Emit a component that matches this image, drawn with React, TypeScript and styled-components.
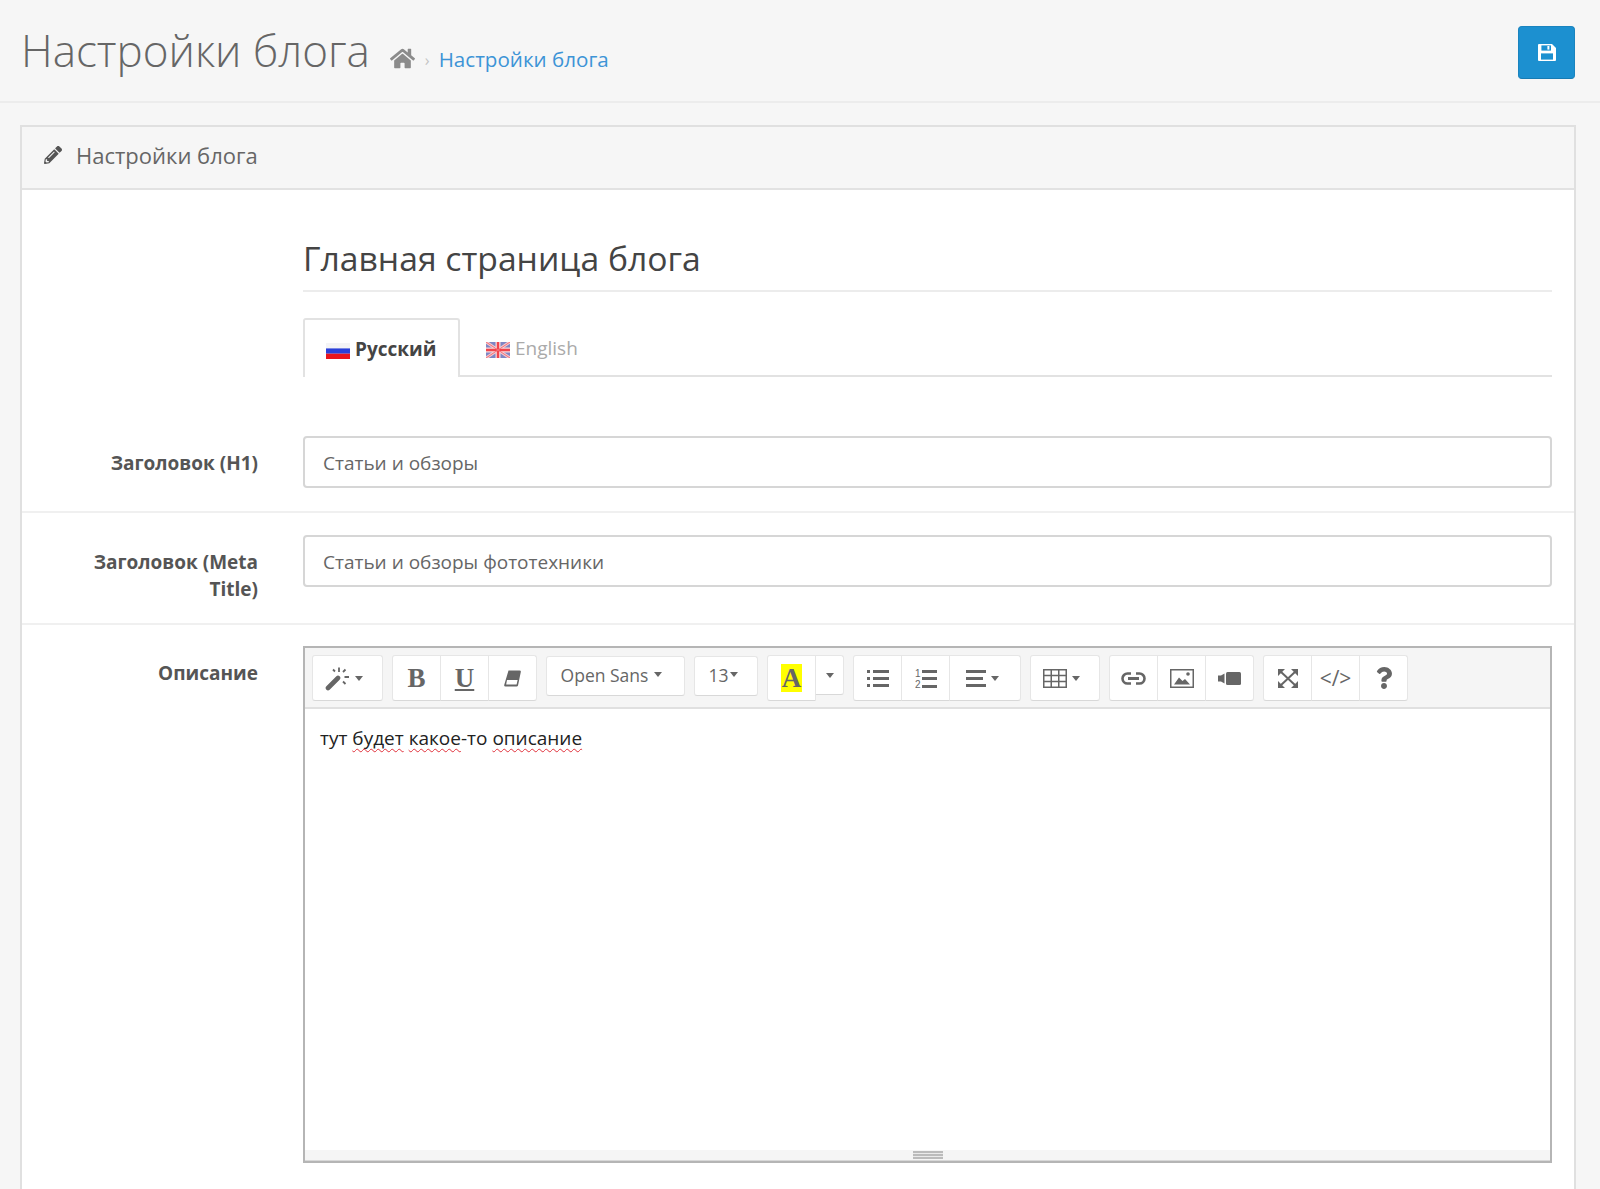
import React from 'react';
import styled, {createGlobalStyle} from 'styled-components';
import {FaHome, FaPencilAlt, FaQuestion} from 'react-icons/fa';

const GlobalStyle = createGlobalStyle`
  html, body {
    margin: 0;
    padding: 0;
    background: #fff;
    font-family: "Open Sans", "Liberation Sans", sans-serif;
    color: #666;
  }
  * { box-sizing: border-box; }
`;

const Page = styled.div`
  height: 100vh;
  overflow: hidden;
  background: #f6f6f6;
`;

const PageHeader = styled.header`
  height: 103px;
  padding: 26px 25px 0 21px;
  display: flex;
  justify-content: space-between;
  border-bottom: 2px solid #ececec;
`;

const TitleLine = styled.div`
  display: flex;
  align-items: center;
  height: 49px;
`;

const PageTitle = styled.h1`
  margin: 0 20px 0 0;
  font-size: 44px;
  font-weight: 300;
  line-height: 49px;
  color: #666;
`;

const Crumbs = styled.nav`
  display: flex;
  align-items: center;
  padding-top: 16px;
  font-size: 20.6px;
  color: #999;
`;

const CrumbSep = styled.span`
  margin: 2px 9px 0 10px;
  font-size: 16px;
  color: #c4c4c4;
`;

const CrumbLink = styled.a`
  color: #3d94d6;
`;

const SaveButton = styled.button`
  width: 57px;
  height: 53px;
  display: flex;
  align-items: center;
  justify-content: center;
  padding: 0;
  background: #1c90d0;
  border: 1px solid #1a84bf;
  border-bottom-color: #167bb3;
  border-radius: 4px;
`;

const Panel = styled.section`
  margin: 22px 24px 0 20px;
  background: #fff;
  border: 2px solid #e0e0e0;
  border-bottom: 0;
`;

const PanelHeading = styled.div`
  height: 63px;
  padding: 0 0 5px 22px;
  display: flex;
  align-items: center;
  gap: 14px;
  font-size: 22px;
  color: #666;
  background: #f6f6f6;
  border-bottom: 2px solid #e2e2e2;
`;

const PanelBody = styled.div`
  padding-top: 48px;
`;

const SectionColumn = styled.div`
  margin-left: 281px;
  margin-right: 22px;
`;

const SectionTitle = styled.h3`
  margin: 0;
  height: 54px;
  font-size: 33.7px;
  line-height: 40px;
  font-weight: 400;
  color: #444;
  border-bottom: 2px solid #ececec;
`;

const Tabs = styled.div`
  display: flex;
  margin-top: 26px;
  height: 59px;
  border-bottom: 2px solid #e2e2e2;
`;

const Tab = styled.div<{$active?: boolean}>`
  height: ${p => (p.$active ? '59px' : '57px')};
  display: flex;
  align-items: center;
  gap: 5px;
  font-size: 19px;
  padding: ${p => (p.$active ? '1px 21px 0' : '3px 25px 0 26px')};
  width: ${p => (p.$active ? '157px' : 'auto')};
  font-weight: ${p => (p.$active ? 700 : 400)};
  color: ${p => (p.$active ? '#444' : '#aaa')};
  background: ${p => (p.$active ? '#fff' : 'transparent')};
  border: ${p => (p.$active ? '2px solid #e2e2e2' : '0')};
  border-bottom: 0;
  border-radius: 3px 3px 0 0;
`;

const FormRow = styled.div<{$pad: string; $border?: boolean}>`
  display: grid;
  grid-template-columns: 236px 1fr;
  column-gap: 45px;
  padding: ${p => p.$pad};
  border-bottom: ${p => (p.$border ? '2px solid #f0f0f0' : '0')};
`;

const Label = styled.label`
  padding-top: 14px;
  text-align: right;
  font-size: 19px;
  line-height: 27px;
  font-weight: 700;
  color: #555;
`;

const Input = styled.input`
  display: block;
  width: 100%;
  height: 52px;
  padding: 1px 18px 0;
  font: 400 19px "Open Sans", "Liberation Sans", sans-serif;
  color: #666;
  background: #fff;
  border: 2px solid #d6d6d6;
  border-radius: 4px;
`;

const Editor = styled.div`
  height: 517px;
  display: flex;
  flex-direction: column;
  border: 2px solid #b5b5b5;
`;

const Toolbar = styled.div`
  height: 61px;
  padding: 7px 0 0 7px;
  display: flex;
  gap: 9px;
  background: #f5f5f5;
  border-bottom: 2px solid #e0e0e0;
`;

const ButtonGroup = styled.div`
  display: flex;
  align-self: flex-start;
`;

const ToolButton = styled.div<{$w?: number; $h?: number; $shift?: number}>`
  width: ${p => p.$w ?? 49}px;
  height: ${p => p.$h ?? 46}px;
  padding-right: ${p => p.$shift ?? 0}px;
  display: flex;
  align-items: center;
  justify-content: center;
  gap: 5px;
  color: #666;
  background: #fff;
  border: 1px solid #e6e6e6;
  border-bottom-color: #d8d8d8;
  margin-left: -1px;
  &:first-child {
    margin-left: 0;
    border-radius: 3px 0 0 3px;
  }
  &:last-child {
    border-radius: 0 3px 3px 0;
  }
  &:only-child {
    border-radius: 3px;
  }
`;

const SelectButton = styled(ToolButton)`
  margin-top: 1px;
  padding-bottom: 3px;
  font-size: 17.5px;
  gap: 6px;
`;

const TightSelect = styled(SelectButton)`
  gap: 1px;
`;

const Caret = styled.i`
  display: block;
  width: 0;
  height: 0;
  border-left: 4px solid transparent;
  border-right: 4px solid transparent;
  border-top: 5px solid #666;
`;

const SerifGlyph = styled.span<{$underline?: boolean}>`
  font: 700 27px "Liberation Serif", serif;
  line-height: 28px;
  text-decoration: ${p => (p.$underline ? 'underline 2px' : 'none')};
  text-underline-offset: 2px;
`;

const HighlightA = styled(SerifGlyph)`
  width: 21px;
  height: 28px;
  text-align: center;
  background: #ffff00;
`;

const CodeLabel = styled.span`
  font-size: 21px;
`;

const Content = styled.div`
  flex: 1;
  padding: 16px 15px;
  font-size: 19px;
  line-height: 26px;
  color: #222;
`;

const Misspelled = styled.span`
  text-decoration: underline wavy #e0303a 1px;
  text-underline-offset: 3px;
  text-decoration-skip-ink: none;
`;

const ResizeBar = styled.div`
  height: 11px;
  display: flex;
  justify-content: center;
  background: #f5f5f5;
  border-bottom: 1px solid #d8d8d8;
`;

const ResizeHandle = styled.div`
  width: 30px;
  height: 8px;
  margin-top: 1px;
  border-top: 2px solid #bbb;
  border-bottom: 2px solid #bbb;
  background: linear-gradient(#eaeaea 1px, #bbb 1px, #bbb 3px, #eaeaea 3px);
`;

const FlagSvg = styled.svg`
  display: block;
  margin-top: 3px;
`;

const Glyph = styled.svg`
  display: block;
  fill: #666;
`;

function RussianFlag() {
  return (
    <FlagSvg width="24" height="16" viewBox="0 0 24 16">
      <rect width="24" height="5.4" fill="#f4f4f6" />
      <rect y="5.4" width="24" height="5.3" fill="#2a3fd8" />
      <rect y="10.7" width="24" height="5.3" fill="#e8141c" />
    </FlagSvg>
  );
}

function EnglishFlag() {
  return (
    <FlagSvg width="24" height="16" viewBox="0 0 24 16">
      <rect width="24" height="16" fill="#7f86c4" />
      <path d="M0 0L24 16M24 0L0 16" stroke="#f6c8cc" strokeWidth="3" />
      <path d="M12 0V16M0 8H24" stroke="#f8d8da" strokeWidth="5" />
      <path d="M12 0V16M0 8H24" stroke="#f2444c" strokeWidth="2.4" />
      <path d="M0 0L24 16M24 0L0 16" stroke="#f2707a" strokeWidth="1" />
    </FlagSvg>
  );
}

function SaveIcon() {
  return (
    <svg width="18" height="17" viewBox="0 0 18 17">
      <path d="M1 0H14L18 4V16a1 1 0 0 1-1 1H1a1 1 0 0 1-1-1V1a1 1 0 0 1 1-1Z" fill="#fff" />
      <rect x="3.4" y="1.4" width="9.6" height="5.2" fill="#1c90d0" />
      <rect x="9.4" y="2" width="2" height="3.6" fill="#fff" />
      <rect x="3" y="9.4" width="12" height="6.2" fill="#1c90d0" />
    </svg>
  );
}

function WandIcon() {
  return (
    <Glyph width="25" height="25" viewBox="0 0 25 25">
      <path d="M3 22L13 12" stroke="#666" strokeWidth="4.6" strokeLinecap="round" />
      <path
        d="M14 1.5V6M20.5 3.5L18 6M8 3.5L10 5.5M19.5 11H24M18 15.5L20.5 18"
        stroke="#666"
        strokeWidth="1.8"
      />
    </Glyph>
  );
}

function EraserIcon() {
  return (
    <Glyph width="17" height="17" viewBox="0 0 17 17">
      <path d="M4.5 0.5H15.5a1.3 1.3 0 0 1 1.3 1.6L14 15.4a1.5 1.5 0 0 1-1.5 1.1H1.5A1.3 1.3 0 0 1 0.2 15Z" />
      <path d="M3 10H13.6L12.6 14.6H2.2Z" fill="#fff" />
    </Glyph>
  );
}

function ListIcon() {
  return (
    <Glyph width="22" height="17" viewBox="0 0 22 17">
      <rect y="0" width="3" height="3" />
      <rect x="6" y="0" width="16" height="3" />
      <rect y="7" width="3" height="3" />
      <rect x="6" y="7" width="16" height="3" />
      <rect y="14" width="3" height="3" />
      <rect x="6" y="14" width="16" height="3" />
    </Glyph>
  );
}

function OrderedListIcon() {
  return (
    <Glyph width="22" height="19" viewBox="0 0 22 19">
      <text x="0" y="8" fontSize="10" fontFamily="Liberation Sans, sans-serif">1</text>
      <text x="0" y="18.5" fontSize="10" fontFamily="Liberation Sans, sans-serif">2</text>
      <rect x="7" y="1" width="15" height="3" />
      <rect x="7" y="8" width="15" height="3" />
      <rect x="7" y="16" width="15" height="3" />
    </Glyph>
  );
}

function AlignIcon() {
  return (
    <Glyph width="20" height="17" viewBox="0 0 20 17">
      <rect y="0" width="20" height="3" />
      <rect y="7" width="17" height="3" />
      <rect y="14" width="20" height="3" />
    </Glyph>
  );
}

function TableIcon() {
  return (
    <Glyph width="24" height="19" viewBox="0 0 24 19">
      <path
        d="M0.75 0.75H23.25V18.25H0.75ZM8.25 0.75V18.25M15.75 0.75V18.25M0.75 6.6H23.25M0.75 12.4H23.25"
        fill="none"
        stroke="#666"
        strokeWidth="1.5"
      />
    </Glyph>
  );
}

function LinkIcon() {
  return (
    <Glyph width="25" height="13" viewBox="0 0 25 13">
      <path
        d="M10 1.5H6.5a5 5 0 0 0 0 10H10M15 1.5h3.5a5 5 0 0 1 0 10H15"
        fill="none"
        stroke="#666"
        strokeWidth="2.6"
      />
      <rect x="7" y="5" width="11" height="3" />
    </Glyph>
  );
}

function ImageIcon() {
  return (
    <Glyph width="24" height="19" viewBox="0 0 24 19">
      <rect x="0.75" y="0.75" width="22.5" height="17.5" fill="none" stroke="#666" strokeWidth="1.5" />
      <path d="M4 15.5L9 8.5L12.5 12L15 10L20 15.5Z" />
      <circle cx="18" cy="5" r="1.8" />
    </Glyph>
  );
}

function VideoIcon() {
  return (
    <Glyph width="23" height="13" viewBox="0 0 23 13">
      <path d="M0 3.5H3L6.5 1.5V11.5L3 9.5H0Z" />
      <rect x="8" y="0" width="15" height="13" rx="1.5" />
    </Glyph>
  );
}

function ExpandIcon() {
  return (
    <Glyph width="20" height="19" viewBox="0 0 20 19">
      <path d="M2 2L18 17M18 2L2 17" stroke="#666" strokeWidth="2" />
      <path d="M0 0H7L0 7ZM20 0H13L20 7ZM0 19H7L0 12ZM20 19H13L20 12Z" />
    </Glyph>
  );
}

function App() {
  return (
    <Page>
      <GlobalStyle />
      <PageHeader>
        <TitleLine>
          <PageTitle>Настройки блога</PageTitle>
          <Crumbs>
            <FaHome size={25} color="#8b8b8b" />
            <CrumbSep>›</CrumbSep>
            <CrumbLink>Настройки блога</CrumbLink>
          </Crumbs>
        </TitleLine>
        <SaveButton aria-label="Сохранить">
          <SaveIcon />
        </SaveButton>
      </PageHeader>

      <Panel>
        <PanelHeading>
          <FaPencilAlt size={18} color="#555" />
          Настройки блога
        </PanelHeading>
        <PanelBody>
          <SectionColumn>
            <SectionTitle>Главная страница блога</SectionTitle>
            <Tabs>
              <Tab $active>
                <RussianFlag />
                Русский
              </Tab>
              <Tab>
                <EnglishFlag />
                English
              </Tab>
            </Tabs>
          </SectionColumn>

          <FormRow $pad="59px 22px 23px 0" $border>
            <Label>Заголовок (H1)</Label>
            <Input defaultValue="Статьи и обзоры" />
          </FormRow>
          <FormRow $pad="22px 22px 20px 0" $border>
            <Label>
              Заголовок (Meta
              <br />
              Title)
            </Label>
            <Input defaultValue="Статьи и обзоры фототехники" />
          </FormRow>
          <FormRow $pad="21px 22px 60px 0">
            <Label>Описание</Label>
            <Editor>
              <Toolbar>
                <ButtonGroup>
                  <ToolButton $w={71} $shift={8}>
                    <WandIcon />
                    <Caret />
                  </ToolButton>
                </ButtonGroup>
                <ButtonGroup>
                  <ToolButton><SerifGlyph>B</SerifGlyph></ToolButton>
                  <ToolButton><SerifGlyph $underline>U</SerifGlyph></ToolButton>
                  <ToolButton><EraserIcon /></ToolButton>
                </ButtonGroup>
                <ButtonGroup>
                  <SelectButton $w={139} $h={40} $shift={8}>
                    Open Sans
                    <Caret />
                  </SelectButton>
                </ButtonGroup>
                <ButtonGroup>
                  <TightSelect $w={64} $h={40} $shift={6}>
                    <span>13</span>
                    <Caret />
                  </TightSelect>
                </ButtonGroup>
                <ButtonGroup>
                  <ToolButton>
                    <HighlightA>A</HighlightA>
                  </ToolButton>
                  <ToolButton $w={29} $h={40}><Caret /></ToolButton>
                </ButtonGroup>
                <ButtonGroup>
                  <ToolButton><ListIcon /></ToolButton>
                  <ToolButton><OrderedListIcon /></ToolButton>
                  <ToolButton $w={72} $shift={6}>
                    <AlignIcon />
                    <Caret />
                  </ToolButton>
                </ButtonGroup>
                <ButtonGroup>
                  <ToolButton $w={70} $shift={8}>
                    <TableIcon />
                    <Caret />
                  </ToolButton>
                </ButtonGroup>
                <ButtonGroup>
                  <ToolButton><LinkIcon /></ToolButton>
                  <ToolButton><ImageIcon /></ToolButton>
                  <ToolButton><VideoIcon /></ToolButton>
                </ButtonGroup>
                <ButtonGroup>
                  <ToolButton><ExpandIcon /></ToolButton>
                  <ToolButton><CodeLabel>&lt;/&gt;</CodeLabel></ToolButton>
                  <ToolButton><FaQuestion size={22} /></ToolButton>
                </ButtonGroup>
              </Toolbar>
              <Content>
                тут <Misspelled>будет</Misspelled> <Misspelled>какое</Misspelled>-то{' '}
                <Misspelled>описание</Misspelled>
              </Content>
              <ResizeBar>
                <ResizeHandle />
              </ResizeBar>
            </Editor>
          </FormRow>
        </PanelBody>
      </Panel>
    </Page>
  );
}

export default App;
